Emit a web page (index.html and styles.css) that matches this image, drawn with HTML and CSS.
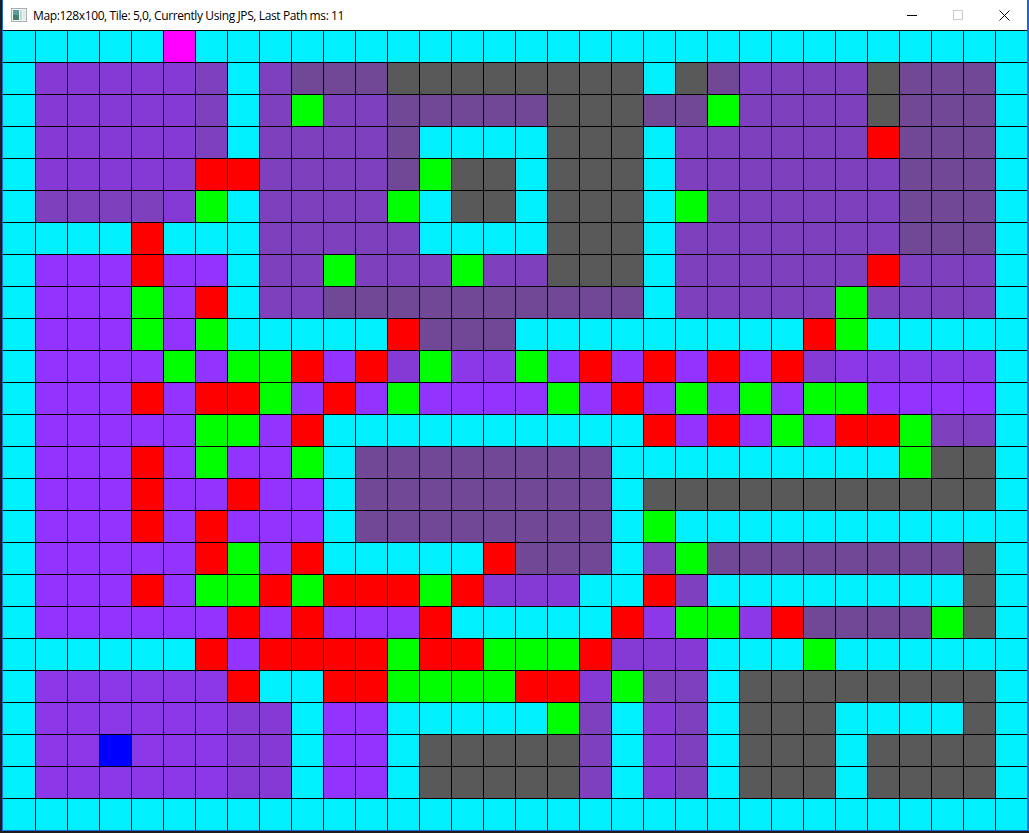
FILE: index.html
```html
<!DOCTYPE html>
<html lang="en">
<head>
    <meta charset="UTF-8">
    <title>Map:128x100, Tile: 5,0, Currently Using JPS, Last Path ms: 11</title>
    <link rel="stylesheet" href="styles.css">
</head>
<body>
    <div class="window">
        <div class="titlebar">
            <div class="title">
                <svg class="app-icon" width="16" height="14" viewBox="0 0 16 14">
                    <rect x="0.5" y="0.5" width="15" height="13" fill="#f4f6f6" stroke="#a9aeb0"/>
                    <rect x="2" y="2" width="6" height="10" fill="#5f9a9c"/>
                    <rect x="2" y="7" width="6" height="5" fill="#3f7f70"/>
                    <rect x="9" y="2" width="2" height="10" fill="#c3d8d4"/>
                    <rect x="12" y="2" width="2" height="10" fill="#dfe6e6"/>
                </svg>
                <span class="title-text">Map:128x100, Tile: 5,0, Currently Using JPS, Last Path ms: 11</span>
            </div>
            <div class="controls">
                <div class="control">
                    <svg width="10" height="10" viewBox="0 0 10 10"><path d="M0 5.5H10" stroke="#000"/></svg>
                </div>
                <div class="control">
                    <svg width="10" height="10" viewBox="0 0 10 10"><rect x="0.5" y="0.5" width="9" height="9" fill="none" stroke="#ccc"/></svg>
                </div>
                <div class="control">
                    <svg width="11" height="11" viewBox="0 0 11 11"><path d="M0.5 0.5L10.5 10.5M10.5 0.5L0.5 10.5" stroke="#000" fill="none"/></svg>
                </div>
            </div>
        </div>
        <div id="map" class="map"></div>
    </div>
    <script src="grid.js"></script>
</body>
</html>
```

FILE: styles.css
```css
body {
    margin: 0;
    background-color: #1b1b20;
    font-family: "Open Sans", sans-serif;
    overflow: hidden;
}
.window {
    width: 1027px;
    margin-left: 2px;
    box-sizing: border-box;
    border-left: 1px solid #1c6ad6;
    border-right: 2px solid #1c6ad6;
    border-bottom: 1px solid #1c6ad6;
}
.titlebar {
    display: flex;
    justify-content: space-between;
    height: 30px;
    background-color: #fff;
}
.title {
    display: flex;
    align-items: center;
    gap: 6px;
    padding-left: 8px;
}
.title-text {
    font-size: 12px;
    letter-spacing: -0.39px;
    color: #000;
    white-space: nowrap;
}
.controls {
    display: flex;
}
.control {
    display: flex;
    align-items: center;
    justify-content: center;
    width: 46px;
}
.map {
    display: grid;
    grid-template-columns: repeat(32, 32px);
    grid-auto-rows: 32px;
}
.cell {
    box-sizing: border-box;
    border-top: 1px solid #000;
    border-left: 1px solid #000;
}
.cell:nth-child(32n+1) {
    border-left: none;
}
.open { background-color: #00f0ff; }
.start { background-color: #ff00ff; }
.goal { background-color: #0000ff; }
.closed { background-color: #ff0000; }
.jump { background-color: #00ff00; }
.wall { background-color: #595959; }
.shade0 { background-color: #9333ff; }
.shade1 { background-color: #8c37e8; }
.shade2 { background-color: #8539d5; }
.shade3 { background-color: #7f40be; }
.shade4 { background-color: #714896; }
```

FILE: grid.js
```js
// one string per row, one letter per tile
const rows = [
    'cccccmcccccccccccccccccccccccccc',
    'c222223c3444ddddddddcd43333d444c',
    'c222223c3g3344444ddd44g3333d444c',
    'c222223c33334ccccdddc333333r444c',
    'c22222rr33334gddcdddc3333333444c',
    'c33332gc3333gcddcdddcg333333444c',
    'ccccrccc33333ccccdddc3333333444c',
    'c000r00c33g333g33dddc333333r333c',
    'c000g0rc334444444444c33333g3333c',
    'c000g0gcccccr444cccccccccrgccccc',
    'c0000g0ggr0r2g11g0r0r0r0r211111c',
    'c000r0rrg0r0g0000g0r0g0g0gg0000c',
    'c00000gg0rccccccccccr0r0g0rrg33c',
    'c000r0g00gc44444444cccccccccgddc',
    'c000r00r00c44444444cdddddddddddc',
    'c000r0r000c44444444cgccccccccccc',
    'c00000rg0rcccccr444c3g44444444dc',
    'c000r0ggrgrrrgr222ccr3ccccccccdc',
    'c000000r0r000rcccccr1gg1r4444gdc',
    'ccccccr0rrrrgrrgggr222cccgcccccc',
    'c111111rccrrggggrr2g33cddddddddc',
    'c11111122c00cccccg3c23cdddccccdc',
    'c11b11122c00cddddd3c23cdddcddddc',
    'c11111122c00cddddd3c23cdddcddddc',
    'cccccccccccccccccccccccccccccccc'
];

const tileClass = {
    c: 'open', m: 'start', b: 'goal', r: 'closed', g: 'jump', d: 'wall',
    0: 'shade0', 1: 'shade1', 2: 'shade2', 3: 'shade3', 4: 'shade4'
};

const map = document.getElementById('map');
rows.forEach(function(row) {
    Array.from(row).forEach(function(tile) {
        const cell = document.createElement('div');
        cell.className = 'cell ' + tileClass[tile];
        map.appendChild(cell);
    });
});
```
